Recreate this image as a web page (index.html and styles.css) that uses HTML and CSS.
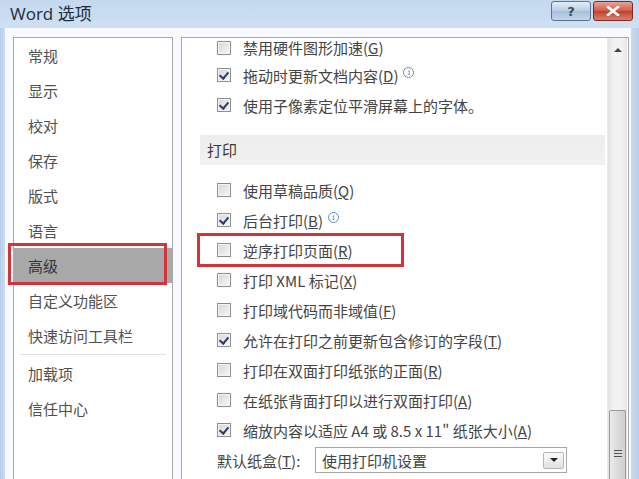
FILE: index.html
```html
<!DOCTYPE html>
<html lang="zh-CN">
<head>
  <meta charset="UTF-8">
  <title>Word 选项</title>
  <link rel="stylesheet" href="styles.css">
</head>
<body>
  <div class="window">
    <div class="titlebar">
      <span class="title">Word 选项</span>
      <div class="caption-btns">
        <div class="cap help">?</div>
        <div class="cap close">
          <svg width="14" height="10" viewBox="0 0 14 10"><path d="M2 1 L12 9 M12 1 L2 9" stroke="#fff" stroke-width="2.6" stroke-linecap="square"/></svg>
        </div>
      </div>
    </div>

    <div class="client">
      <div class="nav">
        <div class="nav-item">常规</div>
        <div class="nav-item">显示</div>
        <div class="nav-item">校对</div>
        <div class="nav-item">保存</div>
        <div class="nav-item">版式</div>
        <div class="nav-item">语言</div>
        <div class="nav-item selected">高级</div>
        <div class="nav-item">自定义功能区</div>
        <div class="nav-item">快速访问工具栏</div>
        <div class="nav-sep"></div>
        <div class="nav-item">加载项</div>
        <div class="nav-item">信任中心</div>
      </div>

      <div class="content">
        <div class="scroll-area">
          <div class="rows">
            <div class="row first"><span class="cb"></span><span class="tight">禁用硬件图形加速(<u>G</u>)</span></div>
            <div class="row"><span class="cb checked"></span>拖动时更新文档内容(<u>D</u>)<span class="info">i</span></div>
            <div class="row"><span class="cb checked"></span>使用子像素定位平滑屏幕上的字体。</div>

            <div class="section">打印</div>

            <div class="row"><span class="cb"></span>使用草稿品质(<u>Q</u>)</div>
            <div class="row"><span class="cb checked"></span>后台打印(<u>B</u>)<span class="info">i</span></div>
            <div class="row marked"><span class="cb"></span>逆序打印页面(<u>R</u>)</div>
            <div class="row"><span class="cb"></span>打印 XML 标记(<u>X</u>)</div>
            <div class="row"><span class="cb"></span>打印域代码而非域值(<u>F</u>)</div>
            <div class="row"><span class="cb checked"></span>允许在打印之前更新包含修订的字段(<u>T</u>)</div>
            <div class="row"><span class="cb"></span>打印在双面打印纸张的正面(<u>R</u>)</div>
            <div class="row"><span class="cb"></span>在纸张背面打印以进行双面打印(<u>A</u>)</div>
            <div class="row"><span class="cb checked"></span>缩放内容以适应 A4 或 8.5 x 11" 纸张大小(<u>A</u>)</div>
            <div class="row tray">
              <span class="tray-label">默认纸盒(<u>T</u>):</span>
              <div class="select">
                <span class="select-text">使用打印机设置</span>
                <span class="select-btn"><svg width="8" height="5" viewBox="0 0 8 5"><path d="M0 0 H8 L4 4 Z" fill="#222"/></svg></span>
              </div>
            </div>
          </div>
        </div>

        <div class="scrollbar">
          <div class="sb-arrow"><svg width="8" height="5" viewBox="0 0 8 5"><path d="M0 5 L4 1 L8 5 Z" fill="#444"/></svg></div>
          <div class="sb-track"></div>
          <div class="sb-thumb">
            <div class="grip"></div>
          </div>
        </div>
      </div>
    </div>
  </div>
</body>
</html>
```

FILE: styles.css
```css
* {
  margin: 0;
  padding: 0;
  box-sizing: border-box;
}

body {
  font-family: "Noto Sans CJK SC", "Noto Sans", sans-serif;
  background: #c3d6ec;
}

.window {
  width: 639px;
  height: 479px;
  overflow: hidden;
  background: linear-gradient(to right, #b6cde8 0, #c9dbef 5px, #c9dbef 631px, #b9cfe8 639px);
}

/* title bar */
.titlebar {
  height: 28px;
  display: flex;
  align-items: flex-start;
  justify-content: space-between;
  background: linear-gradient(#c4d8ee, #cfe0f2);
}

.title {
  font-family: "Open Sans", "Noto Sans CJK SC", sans-serif;
  font-size: 17px;
  color: #1c2b40;
  padding: 2px 0 0 10px;
  line-height: 24px;
}

.caption-btns {
  display: flex;
  gap: 2px;
  padding: 1px 6px 0 0;
}

.cap {
  width: 40px;
  height: 20px;
  border: 1px solid #5e7591;
  border-radius: 3px;
  display: flex;
  align-items: center;
  justify-content: center;
}

.help {
  background: linear-gradient(#e3edf7, #b9cde3 50%, #a7bfdb 51%, #c3d6ea);
  color: #3a4d66;
  font-family: "DejaVu Sans", sans-serif;
  font-size: 13px;
  font-weight: bold;
}

.close {
  border-color: #7a2b24;
  background: linear-gradient(#e8a496, #d05a48 50%, #c2402e 51%, #d8806c);
}

/* client */
.client {
  height: 451px;
  background: #f7f9fc;
  margin: 0 8px 0 5px;
  padding: 9px 2px 0 8px;
  display: grid;
  grid-template-columns: 160px 1fr;
  gap: 8px;
}

.nav {
  background: #fff;
  border: 1px solid #a9a9a9;
  border-bottom: none;
  font-size: 15px;
  color: #505050;
}

.nav-item {
  height: 35px;
  line-height: 35px;
  padding-left: 14px;
  position: relative;
}

.nav-item.selected {
  background: #a8a8a8;
  color: #333;
}

.nav-item.selected::after {
  content: "";
  position: absolute;
  top: -5px;
  left: -6px;
  right: 5px;
  bottom: -2px;
  border: 3px solid #d2343a;
}

.nav-sep {
  height: 1px;
  margin: 1px 6px 1px 6px;
  background: #e2e2e2;
}

/* content panel */
.content {
  background: #fff;
  border: 1px solid #a9a9a9;
  border-bottom: none;
  display: flex;
  padding-right: 1px;
}

.scroll-area {
  flex: 1;
  overflow: hidden;
}

.rows {
  font-size: 15px;
  color: #444;
}

.row {
  height: 30px;
  display: flex;
  align-items: center;
  padding-left: 35px;
  white-space: nowrap;
}

.row.first {
  height: 22px;
  align-items: flex-end;
  padding-bottom: 5px;
}

.tight {
  line-height: 15px;
}

.row.marked {
  width: 207px;
  height: 34px;
  margin: -2px 0 -2px 15px;
  padding-left: 17px;
  border: 3px solid #d2343a;
}

.cb {
  width: 14px;
  height: 14px;
  flex: none;
  margin-right: 12px;
  border: 1px solid #8e8f8f;
  background: linear-gradient(135deg, #d6d6d6, #f7f7f7);
  box-shadow: inset 0 0 0 1px #f4f4f4;
  position: relative;
}

.cb.checked::after {
  content: "";
  position: absolute;
  left: 3px;
  top: 1px;
  width: 4px;
  height: 7px;
  border: solid #2a3d6b;
  border-width: 0 2px 2px 0;
  transform: rotate(40deg);
}

.info {
  width: 11px;
  height: 11px;
  margin-left: 5px;
  border: 1px solid #5c8fd0;
  border-radius: 50%;
  color: #4a7fc4;
  font-family: "DejaVu Serif", serif;
  font-size: 8px;
  line-height: 9px;
  text-align: center;
  align-self: center;
  margin-top: -6px;
}

.section {
  height: 30px;
  line-height: 30px;
  margin: 15px 2px 10px 18px;
  padding-left: 7px;
  background: linear-gradient(#ededed, #f1f1f1);
  font-size: 15px;
  color: #3a3a3a;
}

.tray {
  height: 30px;
}

.tray-label {
  width: 98px;
}

.select {
  width: 252px;
  height: 26px;
  border: 1px solid #a7a7a7;
  display: flex;
  align-items: center;
  justify-content: space-between;
  padding: 0 2px 0 6px;
  background: #fff;
}

.select-btn {
  width: 21px;
  height: 17px;
  border: 1px solid #b5b5b5;
  border-radius: 2px;
  background: linear-gradient(#fafafa, #e1e1e1);
  display: flex;
  align-items: center;
  justify-content: center;
}

/* scrollbar */
.scrollbar {
  width: 20px;
  display: flex;
  flex-direction: column;
  background: linear-gradient(to right, #e3e3e3, #f2f2f2 30%, #f2f2f2 70%, #e6e6e6);
  border-left: 1px solid #ececec;
}

.sb-arrow {
  height: 20px;
  display: flex;
  align-items: center;
  justify-content: center;
  padding-top: 2px;
}

.sb-track {
  height: 352px;
}

.sb-thumb {
  flex: 1;
  margin: 0 1px;
  border: 1px solid #9a9a9a;
  border-bottom: none;
  border-radius: 2px 2px 0 0;
  background: linear-gradient(to right, #eaeaea, #dcdcdc 50%, #cfcfcf);
  padding-top: 39px;
}

.grip {
  width: 8px;
  height: 9px;
  margin: 0 auto;
  background: repeating-linear-gradient(#555 0, #555 1px, #dcdcdc 1px, #dcdcdc 3px);
}
```
